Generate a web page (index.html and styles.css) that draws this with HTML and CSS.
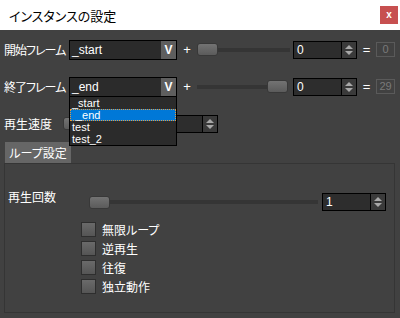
FILE: index.html
```html
<!DOCTYPE html>
<html lang="ja">
<head>
<meta charset="utf-8">
<link rel="stylesheet" href="styles.css">
</head>
<body>
<div class="window">
  <div class="titlebar">
    <span class="title">インスタンスの設定</span>
    <span class="close">x</span>
  </div>
  <div class="content">
    <div class="row">
      <span class="label">開始フレーム</span>
      <div class="select"><span class="sel-text">_start</span><span class="sel-btn">V</span></div>
      <span class="plus">+</span>
      <div class="slider"><div class="thumb"></div><div class="track"></div></div>
      <div class="spin"><span class="spin-val">0</span><span class="spin-btn"><svg width="14" height="16" viewBox="0 0 14 16"><path d="M7 3 L11 7 L3 7 Z" fill="#a8a8a8"/><path d="M7 13 L11 9 L3 9 Z" fill="#a8a8a8"/></svg></span></div>
      <span class="eq">=</span>
      <span class="dis">0</span>
    </div>
    <div class="row">
      <span class="label">終了フレーム</span>
      <div class="select"><span class="sel-text">_end</span><span class="sel-btn">V</span>
        <div class="list">
          <div class="item">_start</div>
          <div class="item sel">_end</div>
          <div class="item">test</div>
          <div class="item">test_2</div>
        </div>
      </div>
      <span class="plus">+</span>
      <div class="slider end"><div class="track"></div><div class="thumb"></div></div>
      <div class="spin"><span class="spin-val">0</span><span class="spin-btn"><svg width="14" height="16" viewBox="0 0 14 16"><path d="M7 3 L11 7 L3 7 Z" fill="#a8a8a8"/><path d="M7 13 L11 9 L3 9 Z" fill="#a8a8a8"/></svg></span></div>
      <span class="eq">=</span>
      <span class="dis">29</span>
    </div>
    <div class="row">
      <span class="label short">再生速度</span>
      <div class="slider speed"><div class="thumb"></div><div class="track"></div></div>
      <div class="spin"><span class="spin-val">1</span><span class="spin-btn"><svg width="14" height="16" viewBox="0 0 14 16"><path d="M7 3 L11 7 L3 7 Z" fill="#a8a8a8"/><path d="M7 13 L11 9 L3 9 Z" fill="#a8a8a8"/></svg></span></div>
    </div>
    <div class="tab">ループ設定</div>
    <div class="group">
      <div class="grow">
        <span class="glabel">再生回数</span>
        <div class="slider count"><div class="thumb"></div><div class="track"></div></div>
        <div class="spin count-spin"><span class="spin-val">1</span><span class="spin-btn"><svg width="14" height="16" viewBox="0 0 14 16"><path d="M7 3 L11 7 L3 7 Z" fill="#a8a8a8"/><path d="M7 13 L11 9 L3 9 Z" fill="#a8a8a8"/></svg></span></div>
      </div>
      <div class="checks">
        <label class="check"><span class="box"></span><span>無限ループ</span></label>
        <label class="check"><span class="box"></span><span>逆再生</span></label>
        <label class="check"><span class="box"></span><span>往復</span></label>
        <label class="check"><span class="box"></span><span>独立動作</span></label>
      </div>
    </div>
  </div>
</div>
</body>
</html>
```
FILE: styles.css
```css
* { box-sizing: border-box; }
body {
  margin: 0;
  background: #414141;
  font-family: "Noto Sans CJK JP", sans-serif;
  font-size: 12px;
  color: #fff;
  font-feature-settings: "palt";
}
.window {
  width: 400px;
  height: 318px;
  background: #414141;
  overflow: hidden;
}
.titlebar {
  height: 30px;
  background: #fff;
  display: flex;
  align-items: center;
  justify-content: space-between;
  padding: 0 2px 0 9px;
}
.title { color: #000; font-size: 13px; }
.close {
  width: 18px;
  height: 18px;
  background: #c75050;
  color: #fff;
  font: bold 10px "Liberation Sans", sans-serif;
  display: flex;
  align-items: center;
  justify-content: center;
  padding-bottom: 1px;
}
.content { padding: 1px 0 0 4px; }
.row {
  height: 37px;
  display: flex;
  align-items: center;
}
.label { width: 65px; white-space: nowrap; letter-spacing: -1px; }
.label.short { width: 59px; letter-spacing: 0; }
.select {
  position: relative;
  width: 108px;
  height: 20px;
  background: #2b2b2b;
  border: 1px solid #000;
  display: flex;
}
.sel-text {
  flex: 1;
  padding-left: 2px;
  font: 12px "Liberation Sans", sans-serif;
  line-height: 18px;
}
.sel-btn {
  width: 15px;
  background: #5e5e5e;
  display: flex;
  align-items: center;
  justify-content: center;
  font: bold 12px "Liberation Sans", sans-serif;
}
.list {
  position: absolute;
  left: -1px;
  top: 18px;
  width: 108px;
  background: #2b2b2b;
  border: 1px solid #000;
  z-index: 5;
  font: 11px "Liberation Sans", sans-serif;
}
.item { height: 12px; line-height: 12px; padding-left: 2px; }
.item.sel {
  line-height: 10px;
  background: #0078d7;
  border: 1px dotted #e89a3c;
  padding-left: 5px;
}
.plus {
  width: 20px;
  text-align: center;
  font: 13px "Liberation Sans", sans-serif;
}
.slider {
  width: 93px;
  height: 14px;
  display: flex;
  align-items: center;
}
.slider.end { padding-right: 2px; }
.slider.speed { width: 88px; }
.slider.count { width: 229px; }
.thumb {
  flex: none;
  width: 21px;
  height: 13px;
  border-radius: 3px;
  background: linear-gradient(#737373, #5b5b5b);
  border: 1px solid #383838;
}
.track { flex: 1; height: 4px; background: #353535; }
.spin {
  margin-left: 3px;
  width: 64px;
  height: 18px;
  border: 1px solid #000;
  background: #2d2d2d;
  display: flex;
}
.count-spin { margin-left: 4px; }
.spin-val {
  flex: 1;
  padding-left: 3px;
  font: 12px "Liberation Sans", sans-serif;
  line-height: 16px;
}
.spin-btn {
  width: 15px;
  border-left: 1px solid #000;
  background: #3a3a3a;
  display: flex;
  align-items: center;
  justify-content: center;
}
.eq {
  width: 19px;
  text-align: center;
  font: 13px "Liberation Sans", sans-serif;
}
.dis {
  width: 19px;
  height: 15px;
  border: 1px solid #5a5a5a;
  color: #7a7a7a;
  font: 11px "Liberation Sans", sans-serif;
  line-height: 13px;
  text-align: center;
}
.tab {
  margin-left: 1px;
  width: 66px;
  height: 21px;
  background: #666;
  line-height: 21px;
  text-align: center;
  font-size: 12px;
}
.group {
  width: 391px;
  height: 150px;
  border: 1px solid #353535;
  padding-left: 3px;
}
.grow {
  margin-top: 29px;
  height: 18px;
  display: flex;
  align-items: center;
}
.glabel { width: 81px; padding-bottom: 12px; white-space: nowrap; }
.checks {
  margin: 9px 0 0 73px;
  display: flex;
  flex-direction: column;
}
.check {
  height: 19px;
  display: flex;
  align-items: center;
  gap: 6px;
}
.box {
  width: 15px;
  height: 15px;
  border: 1px solid #2e2e2e;
  background: linear-gradient(#6a6a6a, #555);
}
```
